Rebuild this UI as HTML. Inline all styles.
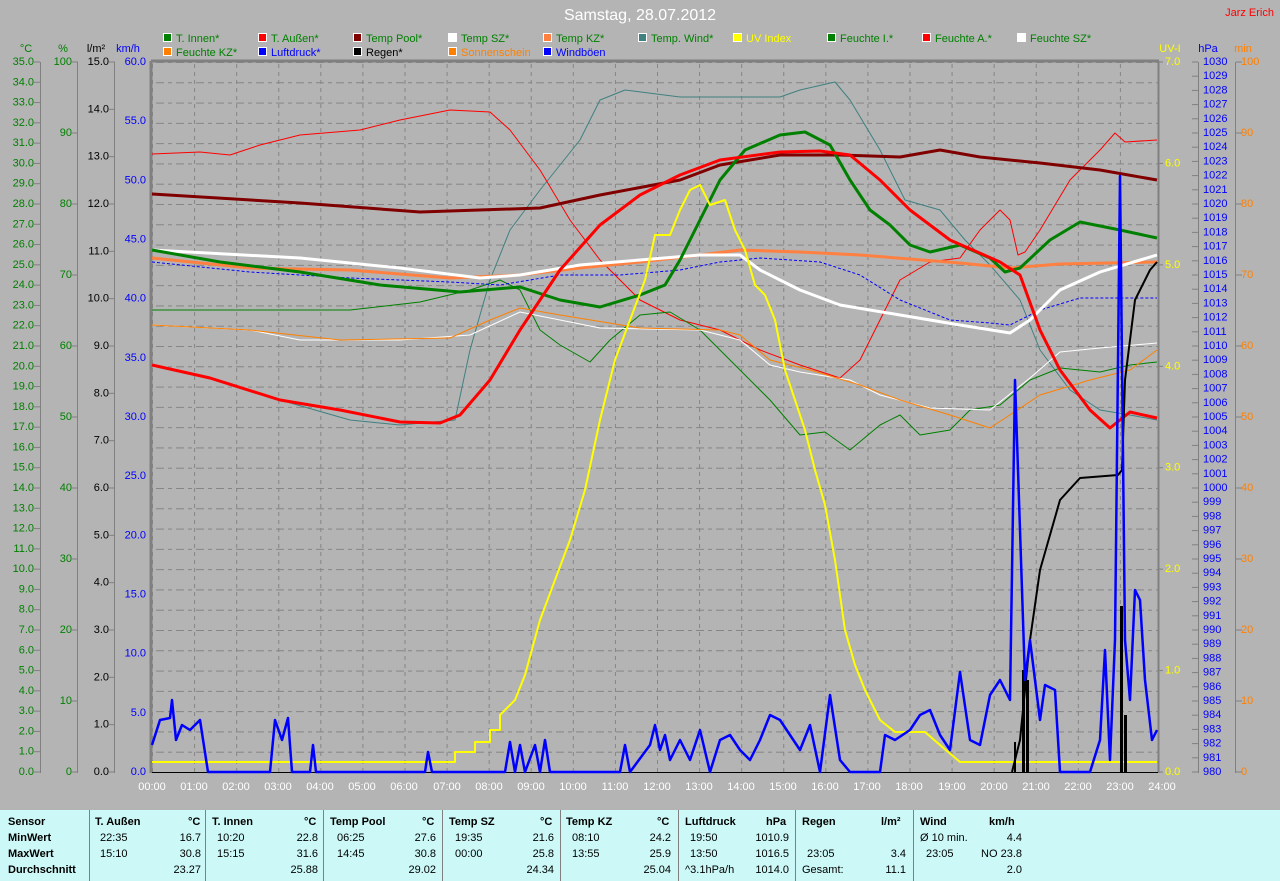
<!DOCTYPE html>
<html><head><meta charset="utf-8"><style>
html,body{margin:0;padding:0;background:#b4b4b4;width:1280px;height:881px;overflow:hidden}
svg{display:block}
text{font-family:"Liberation Sans",sans-serif;font-size:11px}
.tb{position:absolute;left:0;top:810px;width:1280px;height:71px;background:#ccf9f7;font-family:"Liberation Sans",sans-serif;font-size:11px;color:#000}
.tb div{position:absolute;white-space:nowrap}
.b{font-weight:bold}
.sep{position:absolute;top:0;width:1px;height:71px;background:#808080}
</style></head><body>
<svg width="1280" height="881" style="position:absolute;left:0;top:0">
<defs>
<pattern id="hg" x="0" y="62" width="20" height="20.2857" patternUnits="userSpaceOnUse"><line x1="0" y1="0.5" x2="20" y2="0.5" stroke="#858585" stroke-dasharray="4,4"/></pattern>
<pattern id="vg" x="152" y="0" width="42.0833" height="8" patternUnits="userSpaceOnUse"><line x1="0.5" y1="0" x2="0.5" y2="8" stroke="#858585" stroke-dasharray="4,4"/></pattern>
<pattern id="tC" x="0" y="61.5" width="8" height="20.2857" patternUnits="userSpaceOnUse"><line x1="0" y1="0.5" x2="8" y2="0.5" stroke="#808080"/></pattern>
<pattern id="tP" x="0" y="61.5" width="8" height="71" patternUnits="userSpaceOnUse"><line x1="0" y1="0.5" x2="8" y2="0.5" stroke="#808080"/></pattern>
<pattern id="tL" x="0" y="61.5" width="8" height="47.333" patternUnits="userSpaceOnUse"><line x1="0" y1="0.5" x2="8" y2="0.5" stroke="#808080"/></pattern>
<pattern id="tU" x="0" y="61.5" width="8" height="101.43" patternUnits="userSpaceOnUse"><line x1="0" y1="0.5" x2="8" y2="0.5" stroke="#808080"/></pattern>
<pattern id="tH" x="0" y="61.5" width="8" height="14.2" patternUnits="userSpaceOnUse"><line x1="0" y1="0.5" x2="8" y2="0.5" stroke="#808080"/></pattern>
</defs>
<rect x="152" y="62" width="1006" height="710" fill="url(#hg)"/>
<rect x="152" y="62" width="1006" height="710" fill="url(#vg)"/>
<line x1="151" y1="61" x2="1159" y2="61" stroke="#808080" stroke-width="3"/>
<line x1="151" y1="61" x2="151" y2="773" stroke="#808080" stroke-width="3"/>
<line x1="1158.5" y1="61" x2="1158.5" y2="773" stroke="#808080" stroke-width="2"/>
<line x1="152" y1="772.5" x2="1158" y2="772.5" stroke="#000"/>
<line x1="40.5" y1="62" x2="40.5" y2="773" stroke="#808080"/><rect x="34" y="61" width="6" height="712" fill="url(#tC)"/>
<line x1="77.5" y1="62" x2="77.5" y2="773" stroke="#808080"/><rect x="72" y="61" width="6" height="712" fill="url(#tP)"/>
<line x1="114.5" y1="62" x2="114.5" y2="773" stroke="#808080"/><rect x="109" y="61" width="6" height="712" fill="url(#tL)"/>
<rect x="1159" y="61" width="4" height="712" fill="url(#tU)"/>
<line x1="1198.5" y1="62" x2="1198.5" y2="773" stroke="#808080"/><rect x="1192" y="61" width="6" height="712" fill="url(#tH)"/>
<line x1="1235.5" y1="62" x2="1235.5" y2="773" stroke="#808080"/><rect x="1236" y="61" width="6" height="712" fill="url(#tP)"/>

<text x="640" y="20" fill="#fff" text-anchor="middle" style="font-size:16px">Samstag, 28.07.2012</text>
<text x="1274" y="16" fill="#f00" text-anchor="end">Jarz Erich</text>

<g font-size="11">
<rect x="163.5" y="33.5" width="8" height="8" fill="#008000" stroke="#fff"/><text x="176" y="42" fill="#008000">T. Innen*</text>
<rect x="258.5" y="33.5" width="8" height="8" fill="#f00" stroke="#fff"/><text x="271" y="42" fill="#008000">T. Außen*</text>
<rect x="353.5" y="33.5" width="8" height="8" fill="#800000" stroke="#fff"/><text x="366" y="42" fill="#008000">Temp Pool*</text>
<rect x="448.5" y="33.5" width="8" height="8" fill="#fff" stroke="#fff"/><text x="461" y="42" fill="#008000">Temp SZ*</text>
<rect x="543.5" y="33.5" width="8" height="8" fill="#ff8040" stroke="#fff"/><text x="556" y="42" fill="#008000">Temp KZ*</text>
<rect x="638.5" y="33.5" width="8" height="8" fill="#408080" stroke="#fff"/><text x="651" y="42" fill="#008000">Temp. Wind*</text>
<rect x="733.5" y="33.5" width="8" height="8" fill="#ff0" stroke="#fff"/><text x="746" y="42" fill="#ff0">UV Index</text>
<rect x="827.5" y="33.5" width="8" height="8" fill="#008000" stroke="#fff"/><text x="840" y="42" fill="#008000">Feuchte I.*</text>
<rect x="922.5" y="33.5" width="8" height="8" fill="#f00" stroke="#fff"/><text x="935" y="42" fill="#008000">Feuchte A.*</text>
<rect x="1017.5" y="33.5" width="8" height="8" fill="#fff" stroke="#fff"/><text x="1030" y="42" fill="#008000">Feuchte SZ*</text>
<rect x="163.5" y="47.5" width="8" height="8" fill="#ff8000" stroke="#fff"/><text x="176" y="56" fill="#008000">Feuchte KZ*</text>
<rect x="258.5" y="47.5" width="8" height="8" fill="#00f" stroke="#fff"/><text x="271" y="56" fill="#00f">Luftdruck*</text>
<rect x="353.5" y="47.5" width="8" height="8" fill="#000" stroke="#fff"/><text x="366" y="56" fill="#000">Regen*</text>
<rect x="448.5" y="47.5" width="8" height="8" fill="#ff8000" stroke="#fff"/><text x="461" y="56" fill="#ff8000">Sonnenschein</text>
<rect x="543.5" y="47.5" width="8" height="8" fill="#00f" stroke="#fff"/><text x="556" y="56" fill="#00f">Windböen</text>
</g>

<text x="26" y="52" fill="#008000" text-anchor="middle">°C</text>
<text x="63" y="52" fill="#008000" text-anchor="middle">%</text>
<text x="96" y="52" fill="#000" text-anchor="middle">l/m²</text>
<text x="128" y="52" fill="#00f" text-anchor="middle">km/h</text>
<text x="1170" y="52" fill="#ff0" text-anchor="middle">UV-I</text>
<text x="1208" y="52" fill="#00f" text-anchor="middle">hPa</text>
<text x="1243" y="52" fill="#ff8000" text-anchor="middle">min</text>

<g fill="#008000" text-anchor="end" dominant-baseline="central">
<text x="34" y="772">0.0</text><text x="34" y="751.7">1.0</text><text x="34" y="731.4">2.0</text><text x="34" y="711.1">3.0</text><text x="34" y="690.9">4.0</text><text x="34" y="670.6">5.0</text><text x="34" y="650.3">6.0</text><text x="34" y="630">7.0</text><text x="34" y="609.7">8.0</text><text x="34" y="589.4">9.0</text><text x="34" y="569.1">10.0</text><text x="34" y="548.9">11.0</text><text x="34" y="528.6">12.0</text><text x="34" y="508.3">13.0</text><text x="34" y="488">14.0</text><text x="34" y="467.7">15.0</text><text x="34" y="447.4">16.0</text><text x="34" y="427.1">17.0</text><text x="34" y="406.9">18.0</text><text x="34" y="386.6">19.0</text><text x="34" y="366.3">20.0</text><text x="34" y="346">21.0</text><text x="34" y="325.7">22.0</text><text x="34" y="305.4">23.0</text><text x="34" y="285.1">24.0</text><text x="34" y="264.9">25.0</text><text x="34" y="244.6">26.0</text><text x="34" y="224.3">27.0</text><text x="34" y="204">28.0</text><text x="34" y="183.7">29.0</text><text x="34" y="163.4">30.0</text><text x="34" y="143.1">31.0</text><text x="34" y="122.9">32.0</text><text x="34" y="102.6">33.0</text><text x="34" y="82.3">34.0</text><text x="34" y="62">35.0</text>
<text x="72" y="772">0</text><text x="72" y="701">10</text><text x="72" y="630">20</text><text x="72" y="559">30</text><text x="72" y="488">40</text><text x="72" y="417">50</text><text x="72" y="346">60</text><text x="72" y="275">70</text><text x="72" y="204">80</text><text x="72" y="133">90</text><text x="72" y="62">100</text>
</g>
<g fill="#000" text-anchor="end" dominant-baseline="central">
<text x="109" y="772">0.0</text><text x="109" y="724.7">1.0</text><text x="109" y="677.3">2.0</text><text x="109" y="630">3.0</text><text x="109" y="582.7">4.0</text><text x="109" y="535.3">5.0</text><text x="109" y="488">6.0</text><text x="109" y="440.7">7.0</text><text x="109" y="393.3">8.0</text><text x="109" y="346">9.0</text><text x="109" y="298.7">10.0</text><text x="109" y="251.3">11.0</text><text x="109" y="204">12.0</text><text x="109" y="156.7">13.0</text><text x="109" y="109.3">14.0</text><text x="109" y="62">15.0</text>
</g>
<g fill="#00f" text-anchor="end" dominant-baseline="central">
<text x="146" y="772">0.0</text><text x="146" y="712.8">5.0</text><text x="146" y="653.7">10.0</text><text x="146" y="594.5">15.0</text><text x="146" y="535.3">20.0</text><text x="146" y="476.2">25.0</text><text x="146" y="417">30.0</text><text x="146" y="357.8">35.0</text><text x="146" y="298.7">40.0</text><text x="146" y="239.5">45.0</text><text x="146" y="180.3">50.0</text><text x="146" y="121.2">55.0</text><text x="146" y="62">60.0</text>
</g>
<g fill="#ff0" dominant-baseline="central">
<text x="1165" y="772">0.0</text><text x="1165" y="670.6">1.0</text><text x="1165" y="569.1">2.0</text><text x="1165" y="467.7">3.0</text><text x="1165" y="366.3">4.0</text><text x="1165" y="264.9">5.0</text><text x="1165" y="163.4">6.0</text><text x="1165" y="62">7.0</text>
</g>
<g fill="#00f" dominant-baseline="central">
<text x="1203" y="772">980</text><text x="1203" y="757.8">981</text><text x="1203" y="743.6">982</text><text x="1203" y="729.4">983</text><text x="1203" y="715.2">984</text><text x="1203" y="701">985</text><text x="1203" y="686.8">986</text><text x="1203" y="672.6">987</text><text x="1203" y="658.4">988</text><text x="1203" y="644.2">989</text><text x="1203" y="630">990</text><text x="1203" y="615.8">991</text><text x="1203" y="601.6">992</text><text x="1203" y="587.4">993</text><text x="1203" y="573.2">994</text><text x="1203" y="559">995</text><text x="1203" y="544.8">996</text><text x="1203" y="530.6">997</text><text x="1203" y="516.4">998</text><text x="1203" y="502.2">999</text><text x="1203" y="488">1000</text><text x="1203" y="473.8">1001</text><text x="1203" y="459.6">1002</text><text x="1203" y="445.4">1003</text><text x="1203" y="431.2">1004</text><text x="1203" y="417">1005</text><text x="1203" y="402.8">1006</text><text x="1203" y="388.6">1007</text><text x="1203" y="374.4">1008</text><text x="1203" y="360.2">1009</text><text x="1203" y="346">1010</text><text x="1203" y="331.8">1011</text><text x="1203" y="317.6">1012</text><text x="1203" y="303.4">1013</text><text x="1203" y="289.2">1014</text><text x="1203" y="275">1015</text><text x="1203" y="260.8">1016</text><text x="1203" y="246.6">1017</text><text x="1203" y="232.4">1018</text><text x="1203" y="218.2">1019</text><text x="1203" y="204">1020</text><text x="1203" y="189.8">1021</text><text x="1203" y="175.6">1022</text><text x="1203" y="161.4">1023</text><text x="1203" y="147.2">1024</text><text x="1203" y="133">1025</text><text x="1203" y="118.8">1026</text><text x="1203" y="104.6">1027</text><text x="1203" y="90.4">1028</text><text x="1203" y="76.2">1029</text><text x="1203" y="62">1030</text>
</g>
<g fill="#ff8000" dominant-baseline="central">
<text x="1241" y="772">0</text><text x="1241" y="701">10</text><text x="1241" y="630">20</text><text x="1241" y="559">30</text><text x="1241" y="488">40</text><text x="1241" y="417">50</text><text x="1241" y="346">60</text><text x="1241" y="275">70</text><text x="1241" y="204">80</text><text x="1241" y="133">90</text><text x="1241" y="62">100</text>
</g>
<g fill="#fff" text-anchor="middle">
<text x="152" y="790">00:00</text><text x="194" y="790">01:00</text><text x="236" y="790">02:00</text><text x="278" y="790">03:00</text><text x="320" y="790">04:00</text><text x="362" y="790">05:00</text><text x="404" y="790">06:00</text><text x="447" y="790">07:00</text><text x="489" y="790">08:00</text><text x="531" y="790">09:00</text><text x="573" y="790">10:00</text><text x="615" y="790">11:00</text><text x="657" y="790">12:00</text><text x="699" y="790">13:00</text><text x="741" y="790">14:00</text><text x="783" y="790">15:00</text><text x="825" y="790">16:00</text><text x="867" y="790">17:00</text><text x="909" y="790">18:00</text><text x="952" y="790">19:00</text><text x="994" y="790">20:00</text><text x="1036" y="790">21:00</text><text x="1078" y="790">22:00</text><text x="1120" y="790">23:00</text><text x="1162" y="790">24:00</text>
</g>

<g fill="none" stroke-linejoin="round">
<polyline stroke="#408080" stroke-width="1" points="152,365 200,375 280,400 350,420 400,425 455,420 470,350 490,280 510,230 540,190 580,140 600,100 625,90 680,97 740,97 780,97 800,90 835,82 850,100 880,150 905,200 940,210 965,240 990,265 1020,300 1040,350 1070,390 1100,410 1130,415 1157,420"/>
<polyline stroke="#f00" stroke-width="1" points="152,154 200,152 230,155 260,145 300,135 360,130 400,120 450,110 490,112 510,130 540,170 570,220 600,260 640,300 680,320 720,330 760,350 800,365 840,378 860,360 880,320 900,280 930,262 960,258 980,230 1000,210 1010,220 1018,255 1025,252 1040,230 1070,180 1100,150 1115,133 1125,142 1157,140"/>
<polyline stroke="#008000" stroke-width="1" points="152,310 350,310 420,302 470,290 500,280 520,290 540,330 560,345 590,362 610,340 640,315 670,312 700,330 740,370 770,400 800,435 825,432 850,450 880,425 900,415 920,435 950,430 970,410 1000,405 1030,380 1060,368 1100,372 1130,365 1157,362"/>
<polyline stroke="#fff" stroke-width="1" points="152,325 250,330 300,340 400,340 470,335 520,312 560,320 600,328 700,330 740,340 770,365 800,372 850,380 880,395 930,408 990,410 1030,378 1060,352 1100,348 1157,343"/>
<polyline stroke="#ff8000" stroke-width="1" points="152,325 250,330 340,340 450,338 490,320 520,308 560,315 640,328 720,330 740,335 770,360 810,370 860,385 900,400 950,415 990,428 1040,395 1090,380 1130,370 1157,350"/>
<polyline stroke="#00f" stroke-width="1" stroke-dasharray="3,2" points="152,262 250,272 350,278 450,282 500,285 560,275 620,275 680,270 720,262 760,258 820,262 860,275 900,300 950,320 990,323 1010,325 1040,310 1080,298 1120,298 1157,298"/>
<polyline stroke="#800000" stroke-width="3" points="152,194 300,203 420,212 540,208 600,195 680,180 720,165 780,155 840,155 900,157 940,150 980,157 1040,163 1100,170 1157,180"/>
<polyline stroke="#ff8040" stroke-width="3" points="152,258 250,268 350,270 450,278 520,275 580,268 640,262 700,255 740,250 800,252 860,255 960,263 1010,268 1060,264 1157,262"/>
<polyline stroke="#fff" stroke-width="3" points="152,250 300,258 400,268 480,278 520,275 580,265 640,260 700,255 740,255 760,270 800,290 840,305 900,315 960,325 1010,333 1030,320 1060,290 1100,272 1157,255"/>
<polyline stroke="#008000" stroke-width="3" points="152,250 220,262 300,272 380,285 460,292 520,287 560,300 600,307 640,295 665,285 680,260 700,220 720,180 745,150 780,135 805,132 830,145 850,180 870,210 890,225 910,245 930,252 960,245 990,258 1005,272 1020,268 1050,240 1080,222 1120,230 1157,238"/>
<polyline stroke="#f00" stroke-width="3" points="152,365 210,378 280,400 340,410 400,422 440,423 460,415 490,380 520,330 560,270 600,225 640,195 680,175 720,160 780,152 820,151 850,155 880,180 910,210 950,240 1000,262 1020,275 1040,330 1060,370 1090,410 1110,428 1130,412 1157,418"/>
<polyline stroke="#ff0" stroke-width="2" points="152,762 455,762 455,752 475,752 475,742 490,742 490,730 500,730 500,715 515,700 525,675 540,620 555,580 570,540 585,490 600,420 615,360 630,320 645,280 655,235 670,235 680,210 690,190 700,185 710,205 725,200 735,230 745,250 755,285 765,295 775,320 785,370 795,400 805,430 815,470 825,505 835,560 845,630 855,665 865,690 880,720 895,732 925,732 940,745 960,762 1157,762"/>
<polyline stroke="#000" stroke-width="2" points="1012,772 1020,740 1030,640 1040,570 1060,500 1080,478 1118,475 1122,470 1125,380 1135,300 1150,270 1157,262"/>
<g fill="#000" stroke="none"><rect x="1014" y="742" width="2" height="30"/><rect x="1022" y="670" width="3" height="102"/><rect x="1026" y="680" width="3" height="92"/><rect x="1120" y="606" width="3" height="166"/><rect x="1124" y="715" width="3" height="57"/></g>
<polyline stroke="#00f" stroke-width="2.5" points="152,745 160,720 170,718 172,700 176,740 182,725 190,730 200,720 208,772 270,772 275,720 282,740 288,718 292,772 310,772 313,745 316,772 425,772 428,752 432,772 505,772 510,742 515,772 520,745 525,772 535,745 540,772 545,740 550,772 620,772 625,745 630,772 650,745 655,725 660,750 665,735 670,760 680,740 690,760 700,730 710,772 720,740 730,735 740,750 750,760 760,740 770,715 780,720 790,735 800,750 810,725 820,772 830,695 840,760 850,772 880,772 885,735 895,740 910,730 920,715 930,710 940,735 950,750 960,672 970,740 980,745 990,695 1000,680 1010,700 1015,380 1025,680 1030,640 1040,720 1045,685 1055,690 1060,772 1090,772 1100,740 1105,650 1110,760 1115,640 1120,176 1125,640 1130,700 1135,590 1140,600 1145,680 1152,740 1157,730"/>
</g>
</svg>

<div class="tb">
<div class="sep" style="left:89px"></div><div class="sep" style="left:205px"></div><div class="sep" style="left:323px"></div><div class="sep" style="left:442px"></div><div class="sep" style="left:560px"></div><div class="sep" style="left:678px"></div><div class="sep" style="left:795px"></div><div class="sep" style="left:913px"></div>
<div class="b" style="left:8px;top:6px">Sensor</div><div class="b" style="left:8px;top:22px">MinWert</div><div class="b" style="left:8px;top:38px">MaxWert</div><div class="b" style="left:8px;top:54px">Durchschnitt</div>

<div class="b" style="left:95px;top:6px">T. Außen</div><div class="b" style="left:188px;top:6px">°C</div>
<div style="left:100px;top:22px">22:35</div><div style="right:1079px;top:22px">16.7</div>
<div style="left:100px;top:38px">15:10</div><div style="right:1079px;top:38px">30.8</div>
<div style="right:1079px;top:54px">23.27</div>

<div class="b" style="left:212px;top:6px">T. Innen</div><div class="b" style="left:304px;top:6px">°C</div>
<div style="left:217px;top:22px">10:20</div><div style="right:962px;top:22px">22.8</div>
<div style="left:217px;top:38px">15:15</div><div style="right:962px;top:38px">31.6</div>
<div style="right:962px;top:54px">25.88</div>

<div class="b" style="left:330px;top:6px">Temp Pool</div><div class="b" style="left:422px;top:6px">°C</div>
<div style="left:337px;top:22px">06:25</div><div style="right:844px;top:22px">27.6</div>
<div style="left:337px;top:38px">14:45</div><div style="right:844px;top:38px">30.8</div>
<div style="right:844px;top:54px">29.02</div>

<div class="b" style="left:449px;top:6px">Temp SZ</div><div class="b" style="left:540px;top:6px">°C</div>
<div style="left:455px;top:22px">19:35</div><div style="right:726px;top:22px">21.6</div>
<div style="left:455px;top:38px">00:00</div><div style="right:726px;top:38px">25.8</div>
<div style="right:726px;top:54px">24.34</div>

<div class="b" style="left:566px;top:6px">Temp KZ</div><div class="b" style="left:657px;top:6px">°C</div>
<div style="left:572px;top:22px">08:10</div><div style="right:609px;top:22px">24.2</div>
<div style="left:572px;top:38px">13:55</div><div style="right:609px;top:38px">25.9</div>
<div style="right:609px;top:54px">25.04</div>

<div class="b" style="left:685px;top:6px">Luftdruck</div><div class="b" style="left:766px;top:6px">hPa</div>
<div style="left:690px;top:22px">19:50</div><div style="right:491px;top:22px">1010.9</div>
<div style="left:690px;top:38px">13:50</div><div style="right:491px;top:38px">1016.5</div>
<div style="left:685px;top:54px">^3.1hPa/h</div><div style="right:491px;top:54px">1014.0</div>

<div class="b" style="left:802px;top:6px">Regen</div><div class="b" style="left:881px;top:6px">l/m²</div>
<div style="left:807px;top:38px">23:05</div><div style="right:374px;top:38px">3.4</div>
<div style="left:802px;top:54px">Gesamt:</div><div style="right:374px;top:54px">11.1</div>

<div class="b" style="left:920px;top:6px">Wind</div><div class="b" style="left:989px;top:6px">km/h</div>
<div style="left:920px;top:22px">Ø 10 min.</div><div style="right:258px;top:22px">4.4</div>
<div style="left:926px;top:38px">23:05</div><div style="right:258px;top:38px">NO 23.8</div>
<div style="right:258px;top:54px">2.0</div>
</div>
</body></html>
